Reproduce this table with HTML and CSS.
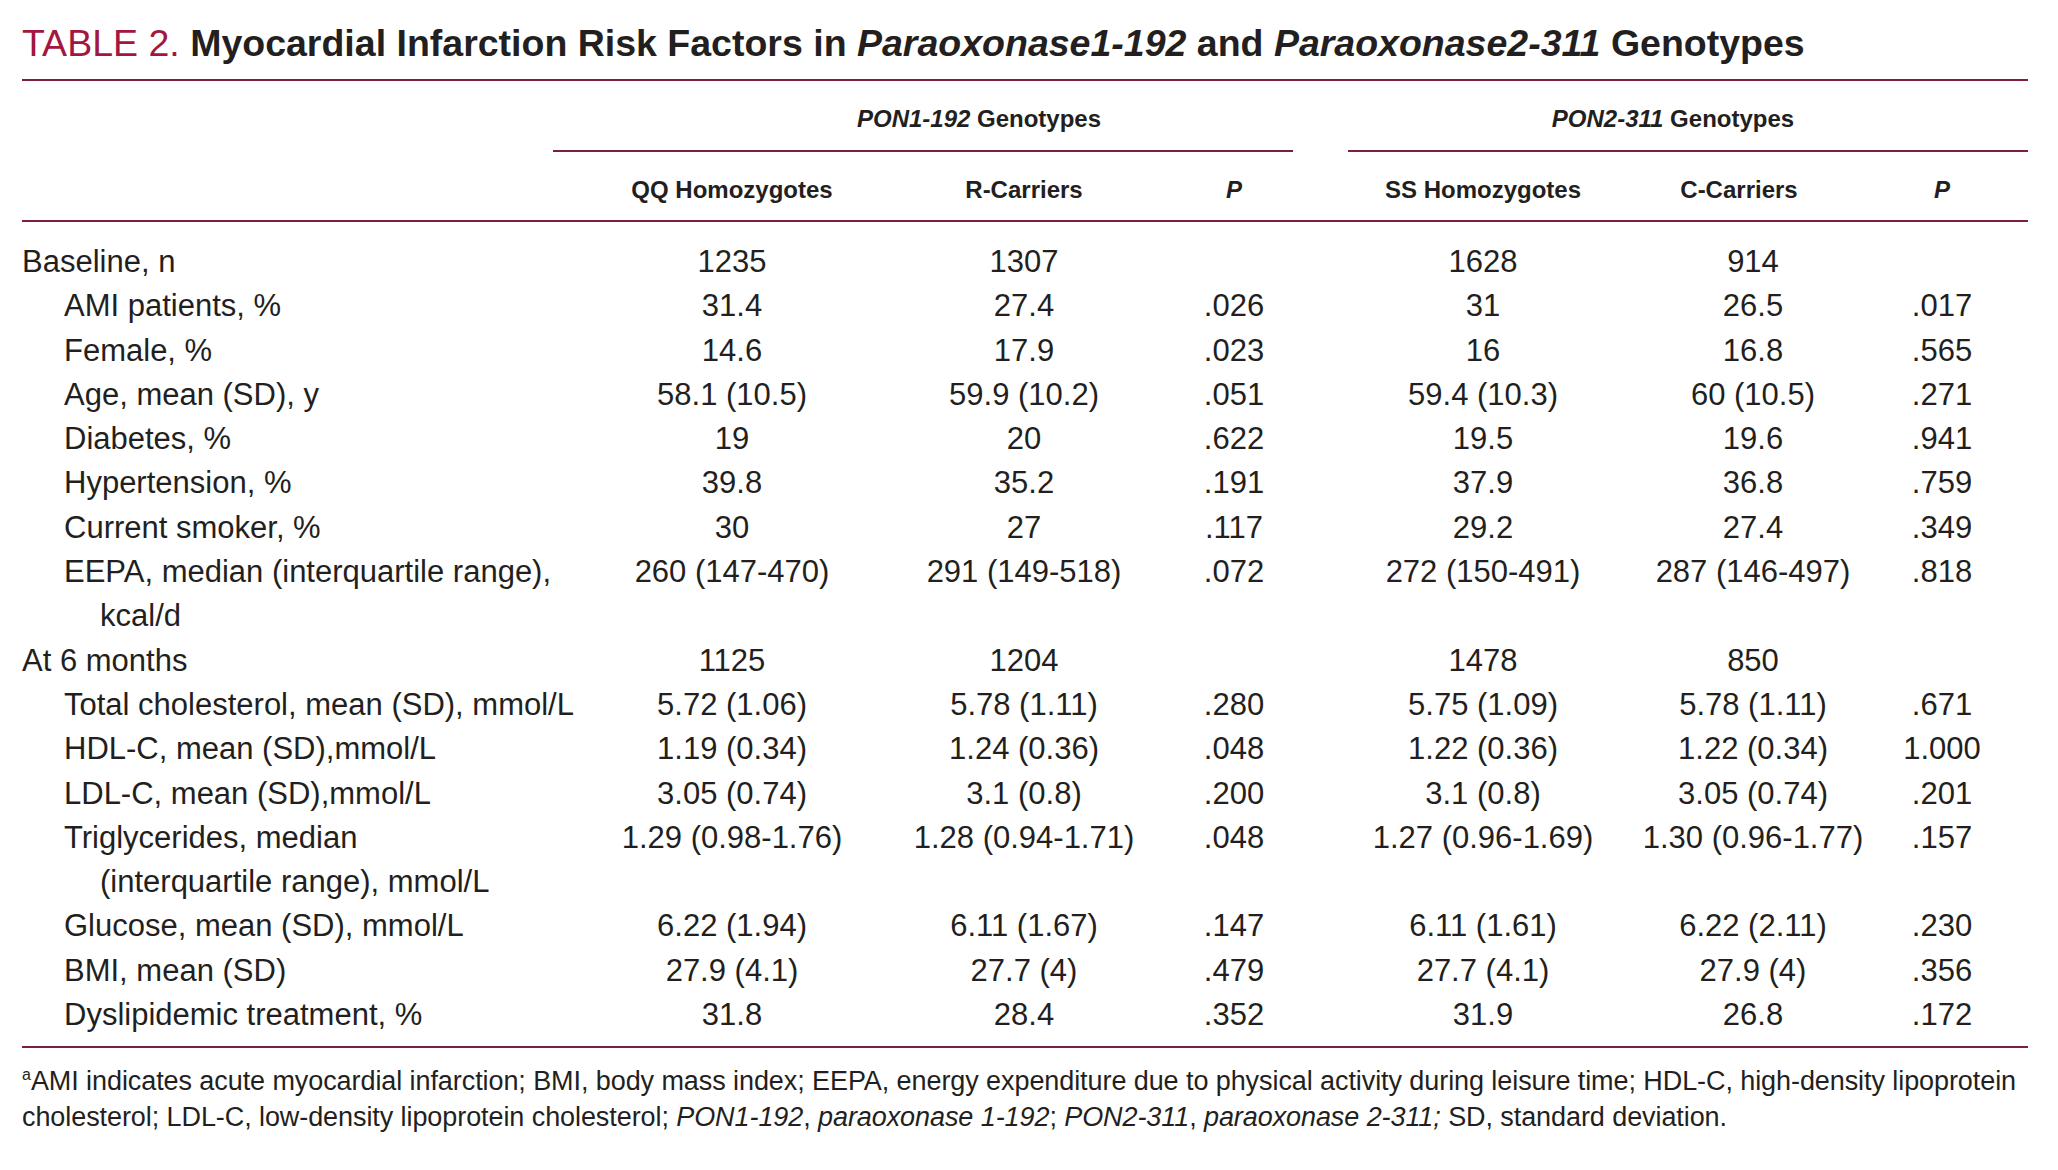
FILE: index.html
```html
<!DOCTYPE html>
<html lang="en">
<head>
<meta charset="utf-8">
<title>Table 2</title>
<link rel="stylesheet" href="styles.css">
</head>
<body>
<div class="page">
  <h1 class="title"><span class="tlabel">TABLE 2.</span> <b>Myocardial Infarction Risk Factors in <i>Paraoxonase1-192</i> and <i>Paraoxonase2-311</i> Genotypes</b></h1>
  <div class="table">
    <div class="grid grp-row">
      <span class="lab"></span>
      <div class="grp g1"><i>PON1-192</i> Genotypes</div>
      <span class="gap"></span>
      <div class="grp g2"><i>PON2-311</i> Genotypes</div>
    </div>
    <div class="grid col-row">
      <span class="lab"></span>
      <span class="ch c1">QQ Homozygotes</span>
      <span class="ch c2">R-Carriers</span>
      <span class="ch p1"><i>P</i></span>
      <span class="gap"></span>
      <span class="ch c3">SS Homozygotes</span>
      <span class="ch c4 hc4">C-Carriers</span>
      <span class="ch p2"><i>P</i></span>
    </div>
    <div class="body">
      <div class="grid row"><span class="lab">Baseline, n</span><span class="c1">1235</span><span class="c2">1307</span><span class="p1"></span><span class="gap"></span><span class="c3">1628</span><span class="c4">914</span><span class="p2"></span></div>
      <div class="grid row"><span class="lab sub">AMI patients, %</span><span class="c1">31.4</span><span class="c2">27.4</span><span class="p1">.026</span><span class="gap"></span><span class="c3">31</span><span class="c4">26.5</span><span class="p2">.017</span></div>
      <div class="grid row"><span class="lab sub">Female, %</span><span class="c1">14.6</span><span class="c2">17.9</span><span class="p1">.023</span><span class="gap"></span><span class="c3">16</span><span class="c4">16.8</span><span class="p2">.565</span></div>
      <div class="grid row"><span class="lab sub">Age, mean (SD), y</span><span class="c1">58.1 (10.5)</span><span class="c2">59.9 (10.2)</span><span class="p1">.051</span><span class="gap"></span><span class="c3">59.4 (10.3)</span><span class="c4">60 (10.5)</span><span class="p2">.271</span></div>
      <div class="grid row"><span class="lab sub">Diabetes, %</span><span class="c1">19</span><span class="c2">20</span><span class="p1">.622</span><span class="gap"></span><span class="c3">19.5</span><span class="c4">19.6</span><span class="p2">.941</span></div>
      <div class="grid row"><span class="lab sub">Hypertension, %</span><span class="c1">39.8</span><span class="c2">35.2</span><span class="p1">.191</span><span class="gap"></span><span class="c3">37.9</span><span class="c4">36.8</span><span class="p2">.759</span></div>
      <div class="grid row"><span class="lab sub">Current smoker, %</span><span class="c1">30</span><span class="c2">27</span><span class="p1">.117</span><span class="gap"></span><span class="c3">29.2</span><span class="c4">27.4</span><span class="p2">.349</span></div>
      <div class="grid row"><span class="lab wrap">EEPA, median (interquartile range),<br>kcal/d</span><span class="c1">260 (147-470)</span><span class="c2">291 (149-518)</span><span class="p1">.072</span><span class="gap"></span><span class="c3">272 (150-491)</span><span class="c4">287 (146-497)</span><span class="p2">.818</span></div>
      <div class="grid row"><span class="lab">At 6 months</span><span class="c1">1125</span><span class="c2">1204</span><span class="p1"></span><span class="gap"></span><span class="c3">1478</span><span class="c4">850</span><span class="p2"></span></div>
      <div class="grid row"><span class="lab sub">Total cholesterol, mean (SD), mmol/L</span><span class="c1">5.72 (1.06)</span><span class="c2">5.78 (1.11)</span><span class="p1">.280</span><span class="gap"></span><span class="c3">5.75 (1.09)</span><span class="c4">5.78 (1.11)</span><span class="p2">.671</span></div>
      <div class="grid row"><span class="lab sub">HDL-C, mean (SD),mmol/L</span><span class="c1">1.19 (0.34)</span><span class="c2">1.24 (0.36)</span><span class="p1">.048</span><span class="gap"></span><span class="c3">1.22 (0.36)</span><span class="c4">1.22 (0.34)</span><span class="p2">1.000</span></div>
      <div class="grid row"><span class="lab sub">LDL-C, mean (SD),mmol/L</span><span class="c1">3.05 (0.74)</span><span class="c2">3.1 (0.8)</span><span class="p1">.200</span><span class="gap"></span><span class="c3">3.1 (0.8)</span><span class="c4">3.05 (0.74)</span><span class="p2">.201</span></div>
      <div class="grid row"><span class="lab wrap">Triglycerides, median<br>(interquartile range), mmol/L</span><span class="c1">1.29 (0.98-1.76)</span><span class="c2">1.28 (0.94-1.71)</span><span class="p1">.048</span><span class="gap"></span><span class="c3">1.27 (0.96-1.69)</span><span class="c4">1.30 (0.96-1.77)</span><span class="p2">.157</span></div>
      <div class="grid row"><span class="lab sub">Glucose, mean (SD), mmol/L</span><span class="c1">6.22 (1.94)</span><span class="c2">6.11 (1.67)</span><span class="p1">.147</span><span class="gap"></span><span class="c3">6.11 (1.61)</span><span class="c4">6.22 (2.11)</span><span class="p2">.230</span></div>
      <div class="grid row"><span class="lab sub">BMI, mean (SD)</span><span class="c1">27.9 (4.1)</span><span class="c2">27.7 (4)</span><span class="p1">.479</span><span class="gap"></span><span class="c3">27.7 (4.1)</span><span class="c4">27.9 (4)</span><span class="p2">.356</span></div>
      <div class="grid row"><span class="lab sub">Dyslipidemic treatment, %</span><span class="c1">31.8</span><span class="c2">28.4</span><span class="p1">.352</span><span class="gap"></span><span class="c3">31.9</span><span class="c4">26.8</span><span class="p2">.172</span></div>
    </div>
  </div>
  <p class="foot"><sup>a</sup>AMI indicates acute myocardial infarction; BMI, body mass index; EEPA, energy expenditure due to physical activity during leisure time; HDL-C, high-density lipoprotein<br>cholesterol; LDL-C, low-density lipoprotein cholesterol; <i>PON1-192</i>, <i>paraoxonase 1-192</i>; <i>PON2-311</i>, <i>paraoxonase 2-311;</i> SD, standard deviation.</p>
</div>
</body>
</html>
```

FILE: styles.css
```css
html, body {
  margin: 0;
  padding: 0;
  background: #ffffff;
}

body {
  color: #231f20;
  font-family: "Liberation Sans", Arial, sans-serif;
}

.page {
  width: 2006px;
  padding: 21px 0 0 22px;
}

.title {
  margin: 0 0 14px 0;
  font-size: 37.5px;
  line-height: 44px;
  font-weight: normal;
  white-space: nowrap;
}

.tlabel {
  color: #a3163f;
}

.title b {
  font-weight: bold;
}

.table {
  border-top: 2px solid #7b1e3f;
  border-bottom: 2px solid #7b1e3f;
}

.grid {
  display: grid;
  grid-template-columns: 531px 358px 226px 156px 55px 278px 254px 148px;
}

.grp-row {
  font-size: 24px;
  font-weight: bold;
  line-height: 30px;
}

.grp {
  padding-top: 23px;
  padding-bottom: 16px;
  border-bottom: 2px solid #7b1e3f;
  white-space: nowrap;
}

.g1 {
  grid-column: 2 / 5;
  text-align: center;
  padding-left: 112px;
}

.g2 {
  grid-column: 6 / 9;
  text-align: center;
  padding-right: 30px;
}

.col-row {
  font-size: 24px;
  font-weight: bold;
  line-height: 30px;
  padding-top: 23px;
  padding-bottom: 15px;
  border-bottom: 2px solid #7b1e3f;
}

.ch {
  text-align: center;
  white-space: nowrap;
}

.body {
  padding: 18px 0 9px 0;
}

.row {
  font-size: 31px;
  line-height: 44.3px;
  align-items: start;
}

.row > span {
  white-space: nowrap;
}

.c1, .c2, .c3, .c4 {
  text-align: center;
}

.c3 {
  padding-right: 8px;
}

.hc4 {
  padding-right: 28px;
}

.p1 {
  text-align: center;
  padding-left: 38px;
}

.p2 {
  text-align: center;
  padding-right: 24px;
}

.lab {
  text-align: left;
}

.sub {
  padding-left: 42px;
}

.wrap {
  padding-left: 78px;
  text-indent: -36px;
}

.foot {
  margin: 15px 0 0 0;
  font-size: 27px;
  letter-spacing: -0.08px;
  line-height: 36px;
  white-space: nowrap;
}

.foot sup {
  font-size: 16px;
  line-height: 0;
  vertical-align: 10px;
  letter-spacing: 0;
}
```
